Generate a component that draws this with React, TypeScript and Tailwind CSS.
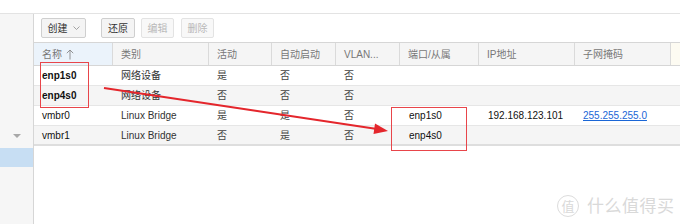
import React from 'react';

const font = { fontFamily: '"Liberation Sans", Arial, "Noto Sans CJK SC", sans-serif' };

type Col = { key: string; label: string; w: string; sorted?: boolean };

const cols: Col[] = [
    { key: 'name', label: '名称', w: 'w-[79px]', sorted: true },
    { key: 'type', label: '类别', w: 'w-[96px]' },
    { key: 'active', label: '活动', w: 'w-[63px]' },
    { key: 'auto', label: '自动启动', w: 'w-[64px]' },
    { key: 'vlan', label: 'VLAN...', w: 'w-[64px]' },
    { key: 'ports', label: '端口/从属', w: 'w-[79px]' },
    { key: 'ip', label: 'IP地址', w: 'w-[96px]' },
    { key: 'mask', label: '子网掩码', w: 'w-[96px]' },
];

const rows = [
    { name: 'enp1s0', bold: true, type: '网络设备', active: '是', auto: '否', vlan: '否', ports: '', ip: '', mask: '' },
    { name: 'enp4s0', bold: true, type: '网络设备', active: '否', auto: '否', vlan: '否', ports: '', ip: '', mask: '' },
    { name: 'vmbr0', bold: false, type: 'Linux Bridge', active: '是', auto: '是', vlan: '否', ports: 'enp1s0', ip: '192.168.123.101', mask: '255.255.255.0' },
    { name: 'vmbr1', bold: false, type: 'Linux Bridge', active: '否', auto: '是', vlan: '否', ports: 'enp4s0', ip: '', mask: '' },
];

const App: React.FC = () => {
    return (
        <div className="relative w-[680px] h-[224px] bg-white overflow-hidden text-[10px]" style={font}>
            {/* top strip */}
            <div className="h-[14px] border-b border-[#e3e3e3] bg-white" />

            <div className="flex h-[210px]">
                {/* left tree panel */}
                <aside className="w-[34px] shrink-0 bg-[#f6f6f6] border-r border-[#d6d6d6] flex flex-col">
                    <div className="h-[112px]" />
                    <div className="h-[20px] flex items-center justify-end pr-[12px]">
                        <div className="w-0 h-0 border-l-[4px] border-r-[4px] border-t-[4px] border-l-transparent border-r-transparent border-t-[#a8a8a8]" />
                    </div>
                    <div className="h-[2px]" />
                    <div className="h-[19px] bg-[#c7def3]" />
                </aside>

                <main className="flex-1 min-w-0">
                    {/* toolbar */}
                    <div className="h-[28px] flex items-center pl-[7px]">
                        <button className="h-[20px] w-[45px] flex items-center justify-center gap-[5px] rounded-[2px] border border-[#cfcfcf] bg-[#f4f4f4] text-[#333]">
                            <span>创建</span>
                            <svg width="7" height="4" viewBox="0 0 7 4" fill="none"><path d="M0.5 0.5 L3.5 3.5 L6.5 0.5" stroke="#999" strokeWidth="0.9" /></svg>
                        </button>
                        <button className="ml-[15px] h-[20px] w-[34px] rounded-[2px] border border-[#cfcfcf] bg-[#f4f4f4] text-[#333]">还原</button>
                        <button className="ml-[6px] h-[20px] w-[33px] rounded-[2px] border border-[#e3e3e3] bg-[#f8f8f8] text-[#b8b8b8]">编辑</button>
                        <button className="ml-[7px] h-[20px] w-[33px] rounded-[2px] border border-[#e3e3e3] bg-[#f8f8f8] text-[#b8b8b8]">删除</button>
                    </div>

                    {/* grid */}
                    <div className="w-[646px]">
                        <div className="flex h-[24px] border-y border-[#d6d6d6] bg-[#f5f5f5]">
                            {cols.map((c) => (
                                <div
                                    key={c.key}
                                    className={`${c.w} shrink-0 h-full flex items-center pl-[8px] border-r border-[#dadada] text-[#777] ${c.sorted ? 'bg-[#ebf3fb]' : ''}`}
                                >
                                    {c.label}
                                    {c.sorted && (
                                        <svg className="ml-[4px]" width="8" height="11" viewBox="0 0 8 11" fill="none">
                                            <path d="M4 1 V10.5 M0.8 4.2 L4 1 L7.2 4.2" stroke="#888" strokeWidth="0.9" />
                                        </svg>
                                    )}
                                </div>
                            ))}
                            <div className="flex-1 bg-[#fdfbf2]" />
                        </div>

                        {rows.map((r, i) => (
                            <div
                                key={r.name}
                                className={`flex h-[20px] border-b ${i === rows.length - 1 ? 'border-b-[2px] border-[#dedede]' : 'border-[#e6e6e6]'} ${i % 2 === 1 ? 'bg-[#f5f5f5]' : 'bg-white'}`}
                            >
                                <div className={`w-[79px] shrink-0 flex items-center pl-[8px] text-[#111] ${r.bold ? 'font-bold' : ''}`}>{r.name}</div>
                                <div className="w-[96px] shrink-0 flex items-center pl-[8px] text-[#333]">{r.type}</div>
                                <div className="w-[63px] shrink-0 flex items-center pl-[8px] text-[#444]">{r.active}</div>
                                <div className="w-[64px] shrink-0 flex items-center pl-[8px] text-[#444]">{r.auto}</div>
                                <div className="w-[64px] shrink-0 flex items-center pl-[8px] text-[#444]">{r.vlan}</div>
                                <div className="w-[79px] shrink-0 flex items-center pl-[9px] text-[#111]">{r.ports}</div>
                                <div className="w-[96px] shrink-0 flex items-center pl-[9px] text-[#111]">{r.ip}</div>
                                <div className="w-[96px] shrink-0 flex items-center pl-[8px]">
                                    {r.mask && <span className="text-[#1a66d6] underline">{r.mask}</span>}
                                </div>
                                <div className="flex-1" />
                            </div>
                        ))}
                    </div>
                </main>
            </div>

            {/* red annotations */}
            <div className="absolute left-[40px] top-[62px] w-[49px] h-[46px] border border-[#e8454a]" />
            <div className="absolute left-[391px] top-[107px] w-[76px] h-[44px] border border-[#e8454a]" />
            <svg className="absolute left-0 top-0" width="680" height="224" viewBox="0 0 680 224">
                <line x1="104" y1="88" x2="377" y2="129" stroke="#e4262c" strokeWidth="2" />
                <polygon points="388,131 375,123.5 373.5,134" fill="#e4262c" />
            </svg>

            {/* watermark */}
            <div className="absolute left-[557px] top-[195px] flex items-center gap-[8px] text-[#d9d9d9]">
                <div className="w-[22px] h-[22px] rounded-full border-[1.5px] border-[#dcdcdc] flex items-center justify-center text-[13px] leading-none">值</div>
                <span className="text-[17px] leading-none tracking-[0.5px]">什么值得买</span>
            </div>
        </div>
    );
};

export default App;
